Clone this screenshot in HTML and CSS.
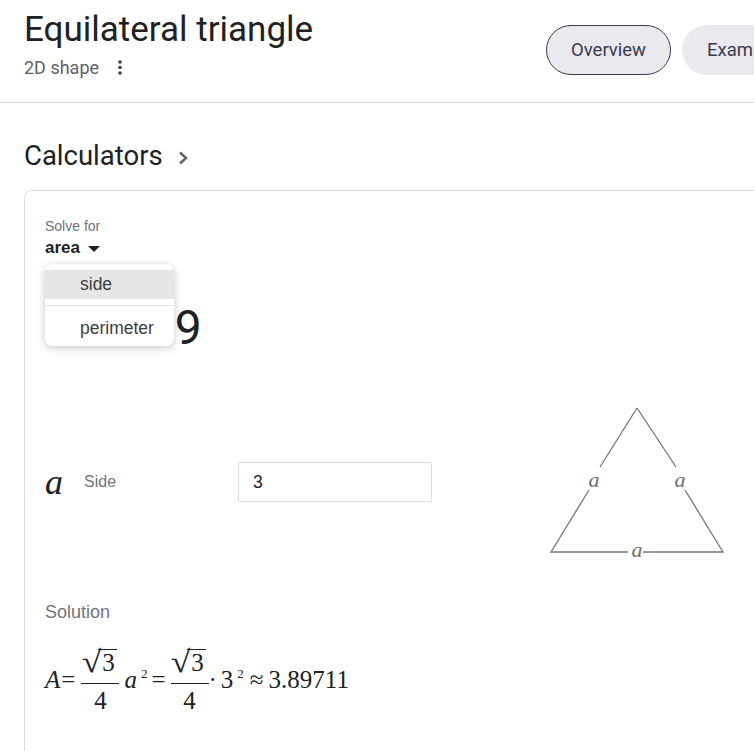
FILE: index.html
```html
<!DOCTYPE html>
<html lang="en">
<head>
<meta charset="utf-8">
<title>Equilateral triangle</title>
<link rel="stylesheet" href="styles.css">
</head>
<body>
<div class="page">
  <header class="hdr">
    <div class="titles">
      <h1 class="title">Equilateral triangle</h1>
      <div class="sub">
        <span>2D shape</span>
        <svg class="kebab" width="4" height="16" viewBox="0 0 4 16"><circle cx="2" cy="2" r="1.8"/><circle cx="2" cy="7.5" r="1.8"/><circle cx="2" cy="13" r="1.8"/></svg>
      </div>
    </div>
    <nav class="tabs">
      <button class="tab active">Overview</button>
      <button class="tab">Examples</button>
    </nav>
  </header>

  <section class="calcs">
    <h2 class="sec-title">Calculators
      <svg class="chev" width="12" height="16" viewBox="0 0 12 16"><path d="M3 2.5 L9 8 L3 13.5" fill="none" stroke="#5f6368" stroke-width="2.4"/></svg>
    </h2>

    <div class="card">
      <div class="solve-label">Solve for</div>
      <div class="solve-sel">area <span class="caret"></span></div>

      <div class="menu">
        <div class="menu-item hl">side</div>
        <div class="menu-sep"></div>
        <div class="menu-item second">perimeter</div>
      </div>

      <div class="result">A ≈ 3.9</div>

      <div class="calc-row">
        <span class="var">a</span>
        <span class="var-name">Side</span>
        <div class="input">3</div>
        <svg class="tri" width="192" height="164" viewBox="0 0 192 164">
          <g stroke="#757575" stroke-width="1.3" fill="none">
            <path d="M96 10 L59 69"/>
            <path d="M48 92 L10 154 L87 154"/>
            <path d="M96 10 L135 69"/>
            <path d="M144 92 L182 154 L102 154"/>
          </g>
          <g class="tri-lbl">
            <text x="53" y="89">a</text>
            <text x="139" y="89">a</text>
            <text x="96" y="159">a</text>
          </g>
        </svg>
      </div>

      <div class="sol-label">Solution</div>
      <div class="formula">
        <i class="it">A</i><span class="eq1">=</span>
        <span class="frac">
          <span class="num"><span class="rad">√</span><span class="radicand">3</span></span>
          <span class="den">4</span>
        </span>
        <span class="term t-a"><i class="it">a</i><sup>2</sup></span>
        <span class="op">=</span>
        <span class="frac">
          <span class="num"><span class="rad">√</span><span class="radicand">3</span></span>
          <span class="den">4</span>
        </span>
        <span class="term t-dot">·<span class="three">3</span><sup>2</sup></span>
        <span class="op approx">≈</span>
        <span class="term">3.89711</span>
      </div>
    </div>
  </section>
</div>
</body>
</html>
```

FILE: styles.css
```css
html, body {
  margin: 0;
  padding: 0;
  overflow: hidden;
  background: #fff;
}

.page {
  width: 820px;
  font-family: Roboto, "Liberation Sans", sans-serif;
  color: #202124;
}

.hdr {
  display: grid;
  grid-template-columns: 522px auto;
  height: 103px;
  box-sizing: border-box;
  border-bottom: 1px solid #dadce0;
  padding-left: 24px;
}

.title {
  margin: 8px 0 0;
  font-size: 35px;
  line-height: 44px;
  font-weight: 400;
  color: #202124;
  white-space: nowrap;
}

.sub {
  margin-top: 4px;
  display: flex;
  align-items: center;
  gap: 19px;
  font-size: 18px;
  line-height: 24px;
  color: #5f6368;
}

.kebab { fill: #3c4043; }

.tabs {
  display: flex;
  gap: 11px;
  margin-top: 25px;
  align-self: start;
}

.tab {
  height: 50px;
  padding: 0 24px;
  border-radius: 25px;
  border: 1px solid transparent;
  background: #e9e9ee;
  font-family: Roboto, sans-serif;
  font-size: 18.5px;
  color: #3a3a50;
  white-space: nowrap;
}

.tab.active {
  border-color: #3a3a4c;
}

.calcs {
  padding: 35px 0 0 24px;
}

.sec-title {
  margin: 0;
  font-size: 27.5px;
  line-height: 36px;
  font-weight: 400;
  display: flex;
  align-items: center;
  gap: 14px;
}

.chev { margin-top: 4px; }

.card {
  position: relative;
  margin-top: 16px;
  width: 780px;
  min-height: 620px;
  border: 1px solid #dadce0;
  border-radius: 8px;
  padding: 25px 0 0 20px;
  box-sizing: border-box;
  font-family: "Liberation Sans", Arial, sans-serif;
}

.solve-label {
  font-size: 14px;
  line-height: 20px;
  color: #70757a;
}

.solve-sel {
  font-size: 17px;
  line-height: 24px;
  font-weight: 700;
  color: #202124;
  display: flex;
  align-items: center;
  gap: 8px;
}

.caret {
  width: 0;
  height: 0;
  border-left: 6px solid transparent;
  border-right: 6px solid transparent;
  border-top: 6px solid #202124;
  margin-top: 1px;
}

.menu {
  position: absolute;
  top: 73px;
  left: 20px;
  width: 129px;
  padding: 6px 0;
  background: #fff;
  border-radius: 8px;
  box-shadow: 0 2px 8px rgba(0, 0, 0, 0.22);
  z-index: 2;
}

.menu-item {
  padding-left: 35px;
  font-size: 17.5px;
  color: #3c4043;
}

.menu-item.hl {
  height: 29px;
  line-height: 29px;
  background: #e6e6e6;
}

.menu-sep {
  margin-top: 6px;
  height: 1px;
  background: #e3e3e3;
}

.menu-item.second {
  padding-top: 10px;
  line-height: 24px;
}

.result {
  margin-top: 40px;
  font-family: Roboto, sans-serif;
  font-size: 48px;
  line-height: 56px;
  color: #202124;
  padding-left: 8px;
}

.calc-row {
  margin-top: 42px;
  display: flex;
  align-items: center;
}

.var, .var-name, .input {
  margin-top: 4px;
}

.var {
  width: 39px;
  font-family: "Liberation Serif", serif;
  font-style: italic;
  font-size: 36px;
  line-height: 40px;
  color: #202124;
}

.var-name {
  width: 154px;
  font-size: 16px;
  color: #70757a;
}

.input {
  width: 194px;
  height: 40px;
  box-sizing: border-box;
  border: 1px solid #dadce0;
  border-radius: 2px;
  padding-left: 14px;
  font-size: 17.5px;
  line-height: 38px;
  color: #202124;
}

.tri {
  margin-left: 109px;
}

.tri-lbl text {
  font-family: "Liberation Serif", serif;
  font-style: italic;
  font-size: 22px;
  fill: #6f6f6f;
  text-anchor: middle;
}

.sol-label {
  margin-top: 38px;
  font-size: 18px;
  line-height: 24px;
  color: #70757a;
}

.formula {
  margin-top: 22px;
  display: flex;
  align-items: center;
  font-family: "Liberation Serif", serif;
  font-size: 25px;
  line-height: 28px;
  color: #202124;
}

.it { font-style: italic; }

.eq1 { margin: 0 6px 0 1px; }

.op { margin: 0 5px 0 4px; }
.approx { margin: 0 5px 0 6px; }

.frac {
  display: flex;
  flex-direction: column;
  align-items: center;
  min-width: 38px;
}

.num {
  display: flex;
  align-items: flex-end;
  padding: 2px 2px 7px 1px;
  height: 28px;
}

.rad {
  font-size: 31px;
  line-height: 28px;
  margin-right: -2px;
  transform: scaleX(1.15);
}

.radicand {
  border-top: 1.4px solid #202124;
  padding: 0 2px 0 4px;
  line-height: 26px;
}

.den {
  align-self: stretch;
  text-align: center;
  border-top: 1px solid #202124;
  padding-top: 4px;
  line-height: 26px;
}

.t-a { margin-left: 5px; }

.three { margin-left: 4px; }

.term sup {
  font-size: 13px;
  vertical-align: 10px;
  line-height: 0;
  margin-left: 4px;
}
```
